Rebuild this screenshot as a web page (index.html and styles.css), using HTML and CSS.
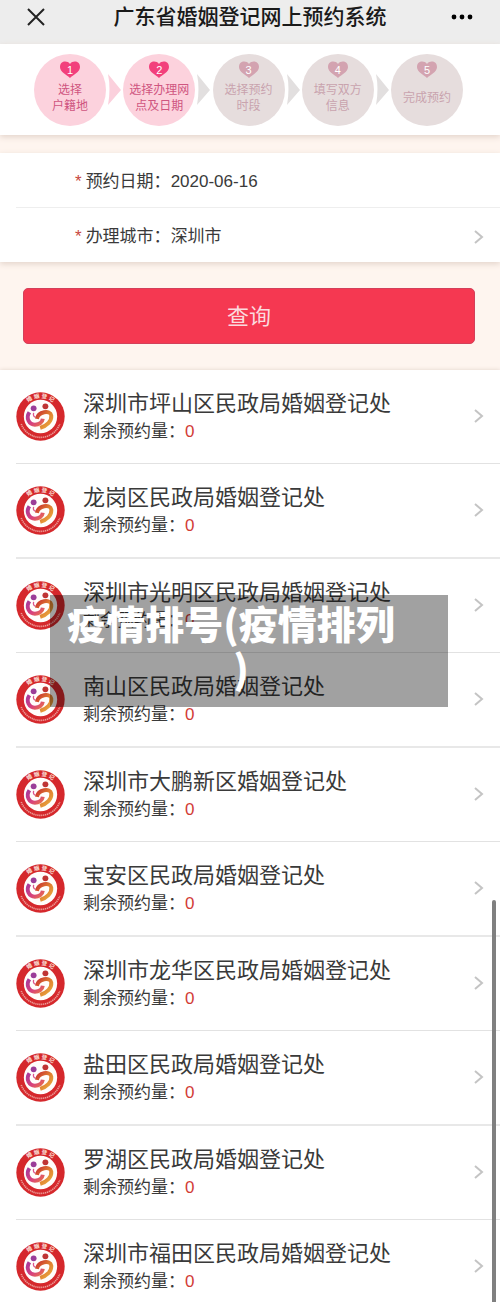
FILE: index.html
```
<!DOCTYPE html>
<html lang="zh-CN">

<head>
    <meta charset="UTF-8">
    <meta name="viewport" content="width=device-width, initial-scale=1.0">
    <title>广东省婚姻登记网上预约系统</title>
    <link rel="stylesheet" href="styles.css">
</head>

<body>
    <!-- shared icons -->
    <svg class="defs" width="0" height="0">
        <defs>
            <linearGradient id="purple" x1="0" y1="0" x2="1" y2="1">
                <stop offset="0" stop-color="#a63a9c" />
                <stop offset="0.6" stop-color="#d8417c" />
                <stop offset="1" stop-color="#e8704a" />
            </linearGradient>
            <linearGradient id="orange" x1="0" y1="0" x2="1" y2="1">
                <stop offset="0" stop-color="#c9312f" />
                <stop offset="0.5" stop-color="#e08030" />
                <stop offset="1" stop-color="#eab040" />
            </linearGradient>
            <path id="arc" d="M18 75a57 57 0 0 1 114 0" />
        </defs>
        <symbol id="logo" viewBox="0 0 150 150">
            <circle cx="75" cy="75" r="74" fill="#d5282c" />
            <circle cx="75" cy="75" r="51" fill="#fffdfb" />
            <text class="logo-text" text-anchor="middle"><textPath href="#arc" startOffset="50%">婚 姻 登 记</textPath></text>
            <path d="M16 98A63 63 0 0 0 134 98" fill="none" stroke="#eb9a96" stroke-width="5" stroke-dasharray="4 2" />
            <circle cx="54" cy="50" r="9" fill="#9b3d98" />
            <circle cx="90" cy="44" r="9" fill="#bf3434" />
            <path d="M41 62C29 80 40 100 58 100C70 100 81 93 82 82" fill="none" stroke="url(#purple)" stroke-width="12" />
            <path d="M54 64C52 71 54 76 60 77" fill="none" stroke="#dc568c" stroke-width="4" />
            <path d="M64 82C68 60 105 54 108 72C110 90 94 104 74 110" fill="none" stroke="url(#orange)" stroke-width="12" />
        </symbol>
        <symbol id="heart" viewBox="0 0 22 18">
            <path d="M11 17C8 14 1 11 1 6C1 0 8-1 11 3C14-1 21 0 21 6C21 11 14 14 11 17Z" fill="currentColor" />
        </symbol>
        <symbol id="arrow" viewBox="0 0 17 32">
            <path d="M2 0L15 16L2 31Q5 15 2 0Z" fill="currentColor" />
        </symbol>
        <symbol id="chevron" viewBox="0 0 10 16">
            <path d="M1 2L8 8L1 14" fill="none" stroke="#c4c4c4" stroke-width="2" />
        </symbol>
    </svg>

    <header class="topbar">
        <button class="icon-btn" aria-label="关闭">
            <svg width="20" height="20" viewBox="0 0 20 20"><path d="M2 2L18 18M18 2L2 18" stroke="#222" stroke-width="2" /></svg>
        </button>
        <h1>广东省婚姻登记网上预约系统</h1>
        <button class="icon-btn" aria-label="更多">
            <svg width="24" height="6" viewBox="0 0 24 6"><circle cx="4" cy="3" r="2.4" /><circle cx="12" cy="3" r="2.4" /><circle cx="20" cy="3" r="2.4" /></svg>
        </button>
    </header>

    <ol class="steps">
        <li class="step active">
            <span class="heart"><svg><use href="#heart" /></svg><b>1</b></span>
            <span class="step-text">选择<br>户籍地</span>
        </li>
        <li class="arrow active" aria-hidden="true"><svg><use href="#arrow" /></svg></li>
        <li class="step active">
            <span class="heart"><svg><use href="#heart" /></svg><b>2</b></span>
            <span class="step-text">选择办理网<br>点及日期</span>
        </li>
        <li class="arrow" aria-hidden="true"><svg><use href="#arrow" /></svg></li>
        <li class="step">
            <span class="heart"><svg><use href="#heart" /></svg><b>3</b></span>
            <span class="step-text">选择预约<br>时段</span>
        </li>
        <li class="arrow" aria-hidden="true"><svg><use href="#arrow" /></svg></li>
        <li class="step">
            <span class="heart"><svg><use href="#heart" /></svg><b>4</b></span>
            <span class="step-text">填写双方<br>信息</span>
        </li>
        <li class="arrow" aria-hidden="true"><svg><use href="#arrow" /></svg></li>
        <li class="step">
            <span class="heart"><svg><use href="#heart" /></svg><b>5</b></span>
            <span class="step-text">完成预约</span>
        </li>
    </ol>

    <form class="search">
        <div class="fields">
            <div class="field">
                <label for="date"><i>*</i>预约日期：</label>
                <input type="text" id="date" value="2020-06-16" readonly>
            </div>
            <div class="field">
                <label for="city"><i>*</i>办理城市：</label>
                <select id="city">
                    <option>深圳市</option>
                </select>
                <svg class="chevron"><use href="#chevron" /></svg>
            </div>
        </div>
        <button class="query" type="button">查询</button>
    </form>

    <main class="list">
        <a href="#" class="office">
            <svg class="logo"><use href="#logo" /></svg>
            <div class="info"><h2>深圳市坪山区民政局婚姻登记处</h2><p>剩余预约量：<b>0</b></p></div>
            <svg class="chevron"><use href="#chevron" /></svg>
        </a>
        <a href="#" class="office">
            <svg class="logo"><use href="#logo" /></svg>
            <div class="info"><h2>龙岗区民政局婚姻登记处</h2><p>剩余预约量：<b>0</b></p></div>
            <svg class="chevron"><use href="#chevron" /></svg>
        </a>
        <a href="#" class="office">
            <svg class="logo"><use href="#logo" /></svg>
            <div class="info"><h2>深圳市光明区民政局婚姻登记处</h2><p>剩余预约量：<b>0</b></p></div>
            <svg class="chevron"><use href="#chevron" /></svg>
        </a>
        <a href="#" class="office">
            <svg class="logo"><use href="#logo" /></svg>
            <div class="info"><h2>南山区民政局婚姻登记处</h2><p>剩余预约量：<b>0</b></p></div>
            <svg class="chevron"><use href="#chevron" /></svg>
        </a>
        <a href="#" class="office">
            <svg class="logo"><use href="#logo" /></svg>
            <div class="info"><h2>深圳市大鹏新区婚姻登记处</h2><p>剩余预约量：<b>0</b></p></div>
            <svg class="chevron"><use href="#chevron" /></svg>
        </a>
        <a href="#" class="office">
            <svg class="logo"><use href="#logo" /></svg>
            <div class="info"><h2>宝安区民政局婚姻登记处</h2><p>剩余预约量：<b>0</b></p></div>
            <svg class="chevron"><use href="#chevron" /></svg>
        </a>
        <a href="#" class="office">
            <svg class="logo"><use href="#logo" /></svg>
            <div class="info"><h2>深圳市龙华区民政局婚姻登记处</h2><p>剩余预约量：<b>0</b></p></div>
            <svg class="chevron"><use href="#chevron" /></svg>
        </a>
        <a href="#" class="office">
            <svg class="logo"><use href="#logo" /></svg>
            <div class="info"><h2>盐田区民政局婚姻登记处</h2><p>剩余预约量：<b>0</b></p></div>
            <svg class="chevron"><use href="#chevron" /></svg>
        </a>
        <a href="#" class="office">
            <svg class="logo"><use href="#logo" /></svg>
            <div class="info"><h2>罗湖区民政局婚姻登记处</h2><p>剩余预约量：<b>0</b></p></div>
            <svg class="chevron"><use href="#chevron" /></svg>
        </a>
        <a href="#" class="office">
            <svg class="logo"><use href="#logo" /></svg>
            <div class="info"><h2>深圳市福田区民政局婚姻登记处</h2><p>剩余预约量：<b>0</b></p></div>
            <svg class="chevron"><use href="#chevron" /></svg>
        </a>
    </main>

    <div class="scrollbar"></div>

    <div class="banner">
        <span class="banner-first">疫情排号(疫情排列</span>
        <span>)</span>
    </div>
</body>

</html>
```
FILE: styles.css
```
* {
    box-sizing: border-box;
    margin: 0;
    padding: 0;
}

body {
    display: flex;
    flex-direction: column;
    height: 100vh;
    overflow: hidden;
    position: relative;
    font-family: "Liberation Sans", "Noto Sans CJK SC", sans-serif;
    color: #3a3a3a;
    background-color: #fef5ef;
}

.defs {
    position: absolute;
}

button,
input,
select {
    font: inherit;
    color: inherit;
    border: none;
    background: none;
    appearance: none;
}

/* top bar */
.topbar {
    display: flex;
    align-items: center;
    justify-content: space-between;
    height: 44px;
    flex-shrink: 0;
    padding: 0 26px 10px;
    background-color: #ededed;
}

.topbar h1 {
    font-size: 21px;
    font-weight: 500;
    line-height: 34px;
    color: #1a1a1a;
}

.icon-btn {
    display: flex;
    width: 24px;
}

/* steps */
.steps {
    display: flex;
    flex-shrink: 0;
    justify-content: space-between;
    padding: 10px 37px 9px 34px;
    list-style: none;
    background-color: #fff;
    box-shadow: 0 2px 6px #e2d3ca;
}

.step {
    display: flex;
    flex-direction: column;
    align-items: center;
    width: 72px;
    height: 72px;
    padding-top: 7px;
    border-radius: 50%;
    color: #c9a3ae;
    background-color: #e6dddd;
}

.step.active {
    color: #cf5580;
    background-color: #fcd2dd;
}

.heart {
    display: grid;
    place-items: center;
    width: 22px;
    height: 18px;
    color: #d3a3b0;
}

.active .heart {
    color: #f2407c;
}

.heart svg,
.heart b {
    grid-area: 1 / 1;
    width: 22px;
    height: 18px;
}

.heart b {
    font-size: 11px;
    font-weight: 400;
    line-height: 18px;
    text-align: center;
    color: #fff;
}

.step-text {
    display: grid;
    align-content: center;
    height: 38px;
    font-size: 12px;
    line-height: 16px;
    text-align: center;
    white-space: nowrap;
}

.arrow {
    display: flex;
    align-items: center;
    color: #e2dfdf;
}

.arrow.active {
    color: #fbd0dc;
}

.arrow svg {
    width: 17px;
    height: 32px;
}

/* search form */
.search {
    flex-shrink: 0;
    padding: 18px 0 26px;
}

.fields {
    padding-left: 16px;
    background-color: #fff;
    box-shadow: 0 2px 6px #e2d3ca;
}

.field {
    display: flex;
    align-items: baseline;
    padding: 3px 16px 0 59px;
    font-size: 17px;
    line-height: 51px;
}

.field + .field {
    border-top: 1px solid #eee;
}

.field i {
    margin-right: 4px;
    font-style: normal;
    color: #c8473f;
}

.field input,
.field select {
    flex: 1;
    min-width: 0;
    height: 51px;
}

.chevron {
    flex-shrink: 0;
    align-self: center;
    width: 10px;
    height: 16px;
}

.query {
    display: block;
    width: calc(100% - 48px);
    height: 56px;
    margin: 26px 25px 0 23px;
    padding-bottom: 4px;
    border: 1px solid #d3405a;
    border-radius: 5px;
    font-size: 22px;
    color: #fbdadf;
    background-color: #f53851;
}

/* office list */
.list {
    flex: 1;
    min-height: 0;
    overflow: hidden;
    padding-left: 16px;
    background-color: #fff;
    box-shadow: 0 0 4px #e2d3ca;
}

.office {
    display: flex;
    align-items: center;
    padding: 16px 16px 17px 0;
    border-bottom: 1px solid #e2e2e2;
    color: inherit;
    text-decoration: none;
}

.office:nth-child(even) {
    border-bottom: 2px solid #e8e8e8;
}

.logo {
    width: 49px;
    height: 49px;
}

.logo-text {
    font-size: 17px;
    font-weight: 700;
    fill: #fbe3dc;
}

.info {
    flex: 1;
    padding: 4px 0 0 18px;
}

.info h2 {
    font-size: 22px;
    font-weight: 400;
    line-height: 28px;
}

.info p {
    font-size: 17px;
    line-height: 28px;
}

.info b {
    font-weight: 400;
    color: #d23c36;
}

.scrollbar {
    position: absolute;
    top: 900px;
    right: 4px;
    bottom: 0;
    width: 4px;
    border-radius: 2px 2px 0 0;
    background-color: #808080;
}

/* caption over the list */
.banner {
    position: absolute;
    top: 595px;
    left: 50px;
    right: 52px;
    padding: 5px 16px 17px 0;
    font-family: "Noto Sans CJK SC", sans-serif;
    font-size: 39px;
    font-weight: 900;
    line-height: 45px;
    text-align: center;
    color: #fff;
    background-color: rgba(0, 0, 0, 0.37);
}

.banner span {
    display: block;
}

.banner .banner-first {
    margin-right: 20px;
}
```
